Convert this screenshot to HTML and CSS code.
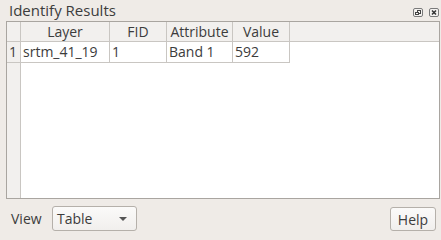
FILE: index.html
```html
<!DOCTYPE html>
<html lang="en">

<head>
    <meta charset="UTF-8">
    <title>Identify Results</title>
    <link rel="stylesheet" href="styles.css">
</head>

<body>
    <!-- Dock title -->
    <div class="titlebar">
        <span class="title">Identify Results</span>
        <div class="dock-buttons">
            <svg width="10" height="9" viewBox="0 0 10 9">
                <rect x="0.5" y="0.5" width="9" height="8" rx="1.5" fill="#f4f2f0" stroke="#7a7a7a"/>
                <rect x="4.5" y="2.5" width="3" height="3" fill="none" stroke="#444"/>
                <rect x="2.5" y="4.5" width="3" height="2" fill="#f4f2f0" stroke="#444"/>
            </svg>
            <svg width="10" height="9" viewBox="0 0 10 9">
                <rect x="0.5" y="0.5" width="9" height="8" rx="1.5" fill="#f4f2f0" stroke="#7a7a7a"/>
                <path d="M3 2.5 L7 6.5 M7 2.5 L3 6.5" stroke="#333" stroke-width="1.5"/>
            </svg>
        </div>
    </div>

    <!-- Results table -->
    <div class="frame">
        <div class="header">
            <div class="cell corner"></div>
            <div class="cell col-layer">Layer</div>
            <div class="cell col-fid">FID</div>
            <div class="cell col-attr">Attribute</div>
            <div class="cell col-value">Value</div>
        </div>
        <div class="body">
            <div class="row">
                <div class="cell corner rownum">1</div>
                <div class="cell col-layer">srtm_41_19</div>
                <div class="cell col-fid">1</div>
                <div class="cell col-attr">Band 1</div>
                <div class="cell col-value">592</div>
            </div>
            <div class="filler"></div>
        </div>
    </div>

    <!-- Bottom controls -->
    <div class="controls">
        <label class="view-label">View</label>
        <div class="combo">
            <span>Table</span>
            <span class="arrow"></span>
        </div>
        <button class="help">Help</button>
    </div>
</body>

</html>
```

FILE: styles.css
```css
body {
    margin: 0;
    width: 441px;
    height: 240px;
    background-color: #efebe7;
    font-family: "Open Sans", "DejaVu Sans", sans-serif;
    font-size: 14px;
    color: #3c3c3c;
    overflow: hidden;
}

.titlebar {
    height: 21px;
    display: flex;
    align-items: center;
    justify-content: space-between;
}

.title {
    padding-left: 9px;
    font-size: 15px;
    margin-top: -1px;
}

.dock-buttons {
    display: flex;
    gap: 6px;
    padding-right: 2px;
    margin-top: 3px;
}

.frame {
    margin: 0 1px 0 6px;
    height: 178px;
    box-sizing: border-box;
    border: 1px solid #a9a5a0;
    background: white;
    display: flex;
    flex-direction: column;
}

.header {
    display: flex;
    height: 20px;
    box-sizing: border-box;
    background: #f2f0ee;
    border-bottom: 1px solid #c9c6c2;
}

.cell {
    box-sizing: border-box;
    border-right: 1px solid #c9c6c2;
    white-space: nowrap;
    line-height: 19px;
}

.header .cell {
    text-align: center;
}

.corner {
    width: 14px;
}

.col-layer {
    width: 89px;
}

.col-fid {
    width: 57px;
}

.col-attr {
    width: 66px;
}

.col-value {
    width: 57px;
}

.body {
    flex: 1;
    display: flex;
    flex-direction: column;
}

.row {
    display: flex;
    height: 21px;
}

.row .cell {
    border-bottom: 1px solid #c9c6c2;
    padding-left: 2px;
    line-height: 20px;
}

.row .rownum {
    background: #f2f0ee;
    padding-left: 2px;
}

.filler {
    flex: 1;
    width: 13px;
    background: #f2f0ee;
    border-right: 1px solid #c9c6c2;
}

.controls {
    display: flex;
    align-items: center;
    padding: 7px 5px 0 11px;
}

.view-label {
    width: 41px;
}

.combo {
    width: 85px;
    height: 25px;
    box-sizing: border-box;
    border: 1px solid #b5b0aa;
    border-radius: 3px;
    background: linear-gradient(#fbfaf9, #f1efed);
    display: flex;
    align-items: center;
    justify-content: space-between;
    padding: 0 9px 0 4px;
}

.arrow {
    width: 0;
    height: 0;
    border-left: 4px solid transparent;
    border-right: 4px solid transparent;
    border-top: 4px solid #555;
}

.help {
    margin-left: auto;
    width: 46px;
    height: 24px;
    margin-top: 1px;
    border: 1px solid #b5b0aa;
    border-radius: 3px;
    background: linear-gradient(#fbfaf9, #f1efed);
    font-family: inherit;
    font-size: 14px;
    color: #3c3c3c;
    padding: 0;
}
```
